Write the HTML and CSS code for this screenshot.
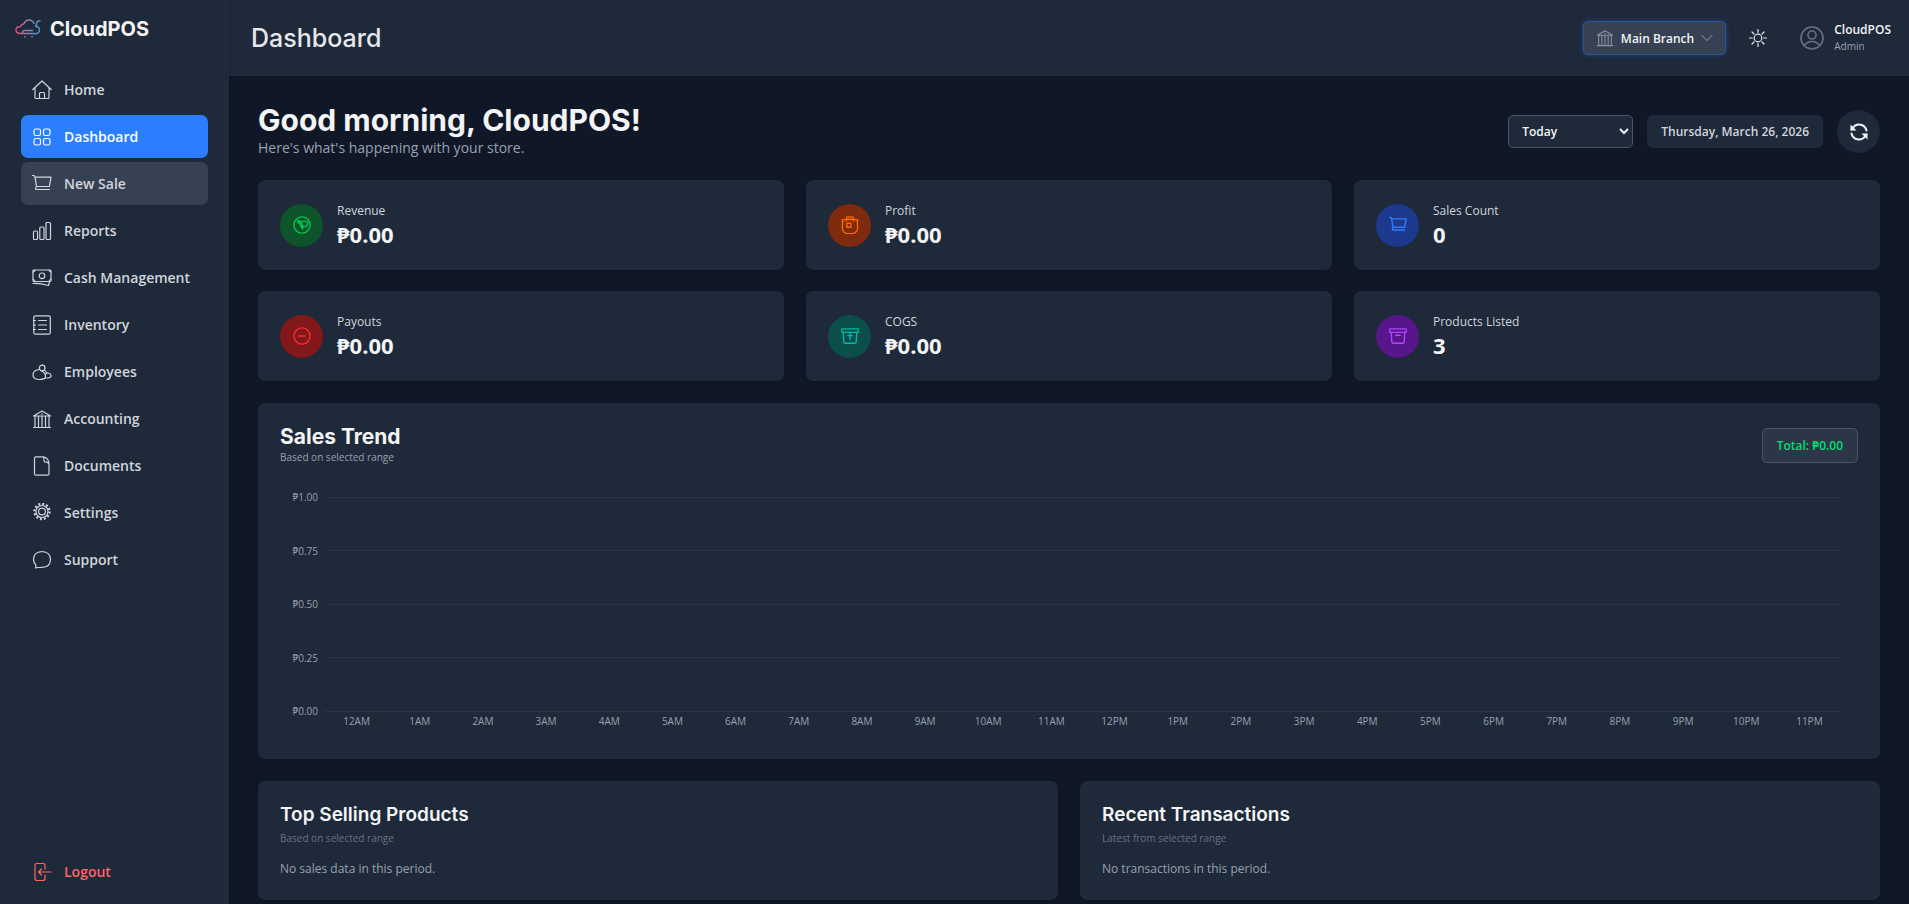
FILE: index.html
```html
<!DOCTYPE html>
<html lang="en">
<head>
  <meta charset="UTF-8" />
  <meta name="viewport" content="width=device-width, initial-scale=1.0"/>
  <title>CloudPOS - Dashboard</title>
  <link rel="stylesheet" href="styles.css">
</head>
<body>
  <!-- shared icons -->
  <svg class="sprite" aria-hidden="true">
    <symbol id="i-cart" viewBox="0 0 20 20"><path d="M.5 1.500h1.700l.8 1.700h16l-1.600 9.300H4.500L3 3.200M4.500 12.500L3.500 14.500q0 1 1 1h13"/></symbol>
    <symbol id="i-bank" viewBox="0 0 20 20"><path d="M1.500 7L10 2l8.500 5zM3 7v11M6.500 7.500V18M10 7.500V18M13.500 7.500V18M17 7v11M1.500 18.500h17M10 4.500v.8"/></symbol>
    <symbol id="i-box" viewBox="0 0 20 20"><rect x=".8" y="2" width="18.400" height="4" rx=".8"/><path d="M2.500 6l.6 10.500q.2 1.500 1.700 1.500h10.400q1.500 0 1.700-1.500L17.500 6"/></symbol>
  </svg>

  <aside class="sidebar">
    <div class="brand">
      <svg class="brand-logo" viewBox="0 0 26 20">
        <defs>
          <linearGradient id="logoFade" gradientUnits="userSpaceOnUse" x1="0" y1="0" x2="26" y2="0">
            <stop offset="0" stop-color="#e0476b"/>
            <stop offset=".55" stop-color="#8a86b5"/>
            <stop offset="1" stop-color="#3f93bd"/>
          </linearGradient>
        </defs>
        <path d="M18.500 14.500H9q-2 0-1.500-1.500t2-1.500h8M5.500 14.500Q1 14.500 1 11T5.500 7.500Q6.500 5 9 4.800Q10.500 1 14 1T19 4.500M25 2h-1.500q-2 .3-2 3.500l-.5 2.500M20.500 7Q24.500 7.500 24.500 11T19.500 14.800M5.500 14.500h2"/>
        <path d="M10 17.500v.5M17 17.500v.5"/>
      </svg>
      <span>CloudPOS</span>
    </div>

    <nav class="nav">
      <a class="nav-item" href="#">
        <svg class="icon" viewBox="0 0 20 20"><path d="M.8 9.500L10 1l9.200 8.500M3 8v9.500q0 1 1 1h12q1 0 1-1V8M7.500 18v-4.500q0-1 1-1h3q1 0 1 1V18"/></svg>
        Home
      </a>
      <a class="nav-item active" href="#">
        <svg class="icon" viewBox="0 0 20 20"><rect x="2" y="2" width="6.500" height="6.500" rx="1.800"/><rect x="11.500" y="2" width="6.500" height="6.500" rx="1.800"/><rect x="2" y="11.500" width="6.500" height="6.500" rx="1.800"/><rect x="11.500" y="11.500" width="6.500" height="6.500" rx="1.800"/></svg>
        Dashboard
      </a>
      <a class="nav-item hovered" href="#">
        <svg class="icon"><use href="#i-cart"/></svg>
        New Sale
      </a>
      <a class="nav-item" href="#">
        <svg class="icon" viewBox="0 0 20 20"><rect x="1.500" y="10" width="4" height="8.500" rx="1"/><rect x="7.800" y="6" width="4.200" height="12.500" rx="1"/><rect x="14" y="1.500" width="4.500" height="17" rx="1"/></svg>
        Reports
      </a>
      <a class="nav-item" href="#">
        <svg class="icon" viewBox="0 0 20 20"><rect x="1" y="2" width="18" height="11.500" rx="1"/><circle cx="10" cy="7.800" r="2.800"/><path d="M1 4q1.500 0 1.800-1.800M19 4q-1.500 0-1.800-1.800M1 11.500q1.500 0 1.800 1.800M19 11.500q-1.500 0-1.800 1.800M1 15.500q8-.3 15.500 2l.8-3"/></svg>
        Cash Management
      </a>
      <a class="nav-item" href="#">
        <svg class="icon" viewBox="0 0 20 20"><rect x="1.800" y=".8" width="16.500" height="18.400" rx="1.500"/><path d="M6.500 5.500h8M6.500 10h8M6.500 14.500h8M1.500 5.500h2M1.500 10h2M1.500 14.500h2"/></svg>
        Inventory
      </a>
      <a class="nav-item" href="#">
        <svg class="icon" viewBox="0 0 20 20"><circle cx="10.200" cy="6" r="2.800"/><path d="M7.500 7.500Q1 8 1 13q0 4.500 6.500 4.500t6-3.500q-.5-4-5-5.500M12.500 8l2 2.500M13.500 12.500q1-2 3-1.500t2.700 2.800q-.2 2.200-3.200 2.200h-3"/></svg>
        Employees
      </a>
      <a class="nav-item" href="#">
        <svg class="icon"><use href="#i-bank"/></svg>
        Accounting
      </a>
      <a class="nav-item" href="#">
        <svg class="icon" viewBox="0 0 20 20"><path d="M11 .8H4q-1.500 0-1.500 1.500v15.400q0 1.500 1.500 1.500h11.500q1.500 0 1.500-1.500V8.500Q17 1.500 11 .8q1 .5 1 3t1.800 2.200T17 8.500"/></svg>
        Documents
      </a>
      <a class="nav-item" href="#">
        <svg class="icon" viewBox="0 0 20 20"><circle class="teeth" cx="10" cy="8.500" r="7.600"/><circle cx="10" cy="8.500" r="6"/><circle cx="10" cy="8.500" r="3.400"/></svg>
        Settings
      </a>
      <a class="nav-item" href="#">
        <svg class="icon" viewBox="0 0 20 20"><path d="M10 1.500q8.500.5 8.500 8T10 17.300q-2 .2-4 .2l-2.500.5q.7-1.500.3-3.200Q1.500 12.500 1.500 9.500 1.500 2 10 1.500z"/></svg>
        Support
      </a>
    </nav>

    <button class="nav-item logout" type="button">
      <svg class="icon" viewBox="0 0 20 20"><path d="M13 7V3.500q0-2-2-2H5q-2 0-2 2v13q0 2 2 2h6q2 0 2-2V13M19 10H7M9.500 7L6.500 10l3 3"/></svg>
      Logout
    </button>
  </aside>

  <div class="main">
    <header class="topbar">
      <h1>Dashboard</h1>
      <div class="topbar-right">
        <button class="branch-btn" type="button">
          <svg class="icon-sm"><use href="#i-bank"/></svg>
          Main Branch
          <svg class="chevron" viewBox="0 0 12 12"><path d="M1 3.500l5 5 5-5"/></svg>
        </button>
        <button class="theme-btn" type="button" aria-label="Toggle theme">
          <svg class="icon" viewBox="0 0 20 20"><circle cx="10" cy="10" r="3.800"/><path d="M10 1.500v2.800M10 15.700v2.800M1.500 10h2.800M15.700 10h2.800M4 4l2 2M14 14l2 2M4 16l2-2M14 6l2-2"/></svg>
        </button>
        <div class="user">
          <svg class="avatar" viewBox="0 0 24 24"><circle cx="12" cy="12" r="11"/><circle cx="12" cy="9" r="4"/><path d="M4.500 19.500Q7 15.500 12 15.500t7.500 4"/></svg>
          <div>
            <div class="user-name">CloudPOS</div>
            <div class="user-role">Admin</div>
          </div>
        </div>
      </div>
    </header>

    <main class="content">
      <section class="welcome">
        <div>
          <h2>Good morning, CloudPOS!</h2>
          <p>Here's what's happening with your store.</p>
        </div>
        <div class="filters">
          <select class="range-select" aria-label="Date range">
            <option>Today</option>
            <option>This Week</option>
            <option>This Month</option>
          </select>
          <div class="date-box">Thursday, March 26, 2026</div>
          <button class="refresh-btn" type="button" aria-label="Refresh">
            <svg class="icon" viewBox="0 0 20 20"><path d="M17.500 8.500A7.600 7.600 0 0 0 4 5.500L2.500 7.500M2.500 11.500A7.600 7.600 0 0 0 16 14.500l1.500-2"/><path class="solid" d="M1.500 2.500v6h6zM18.500 17.500v-6h-6z"/></svg>
          </button>
        </div>
      </section>

      <section class="stats">
        <div class="card stat">
          <div class="stat-icon green"><svg class="icon-sm" viewBox="0 0 20 20"><circle cx="10" cy="10" r="9"/><path d="M5.500 5l5 9.500.5-3M5.500 5.500l3 .5h5.500q2.500 0 2.300 2.500T13.500 12l-4.500-1M9 6.500l1.500 4.500M5.500 5v2.500l3 .5"/></svg></div>
          <div><div class="stat-label">Revenue</div><div class="stat-value">₱0.00</div></div>
        </div>
        <div class="card stat">
          <div class="stat-icon orange"><svg class="icon-sm" viewBox="0 0 20 20"><path d="M1.500 6V4h17v2M1.500 11Q1 19.500 8 19.500h4q7 0 6.500-8.500M2 5.500L1.500 12M18 5.500l.5 6.500M6 5.500V2.500Q6 1 7.500 1h5Q14 1 14 2.500v3M6 3.500h8"/><rect x="6.500" y="8" width="4.500" height="4.500"/></svg></div>
          <div><div class="stat-label">Profit</div><div class="stat-value">₱0.00</div></div>
        </div>
        <div class="card stat">
          <div class="stat-icon blue"><svg class="icon-sm"><use href="#i-cart"/></svg></div>
          <div><div class="stat-label">Sales Count</div><div class="stat-value">0</div></div>
        </div>
        <div class="card stat">
          <div class="stat-icon red"><svg class="icon-sm" viewBox="0 0 20 20"><circle cx="10" cy="10" r="9"/><path d="M6.500 10h7"/></svg></div>
          <div><div class="stat-label">Payouts</div><div class="stat-value">₱0.00</div></div>
        </div>
        <div class="card stat">
          <div class="stat-icon teal"><svg class="icon-sm" viewBox="0 0 20 20"><use href="#i-box"/><path d="M10 7V14M7.500 9.500h5"/></svg></div>
          <div><div class="stat-label">COGS</div><div class="stat-value">₱0.00</div></div>
        </div>
        <div class="card stat">
          <div class="stat-icon purple"><svg class="icon-sm" viewBox="0 0 20 20"><use href="#i-box"/><path d="M7.500 9.200h5"/></svg></div>
          <div><div class="stat-label">Products Listed</div><div class="stat-value">3</div></div>
        </div>
      </section>

      <section class="card trend">
        <div class="trend-head">
          <div>
            <h3>Sales Trend</h3>
            <p class="trend-sub">Based on selected range</p>
          </div>
          <div class="total-box">Total: ₱0.00</div>
        </div>
        <div class="chart">
          <div class="chart-rows">
            <div class="chart-row"><span>₱1.00</span><i></i></div>
            <div class="chart-row"><span>₱0.75</span><i></i></div>
            <div class="chart-row"><span>₱0.50</span><i></i></div>
            <div class="chart-row"><span>₱0.25</span><i></i></div>
            <div class="chart-row"><span>₱0.00</span><i></i></div>
          </div>
          <div class="chart-hours">
            <span>12AM</span><span>1AM</span><span>2AM</span><span>3AM</span><span>4AM</span><span>5AM</span>
            <span>6AM</span><span>7AM</span><span>8AM</span><span>9AM</span><span>10AM</span><span>11AM</span>
            <span>12PM</span><span>1PM</span><span>2PM</span><span>3PM</span><span>4PM</span><span>5PM</span>
            <span>6PM</span><span>7PM</span><span>8PM</span><span>9PM</span><span>10PM</span><span>11PM</span>
          </div>
        </div>
      </section>

      <section class="lists">
        <div class="card list">
          <h4>Top Selling Products</h4>
          <p class="list-sub">Based on selected range</p>
          <p class="list-empty">No sales data in this period.</p>
        </div>
        <div class="card list">
          <h4>Recent Transactions</h4>
          <p class="list-sub">Latest from selected range</p>
          <p class="list-empty">No transactions in this period.</p>
        </div>
      </section>
    </main>
  </div>
</body>
</html>
```

FILE: styles.css
```css
* { margin: 0; padding: 0; box-sizing: border-box; }

body {
  display: flex;
  height: 100vh;
  background: #101828;
  color: #f3f4f6;
  font-family: "Open Sans", "Noto Sans", sans-serif;
  font-size: 12px;
}

button, select { font: inherit; color: inherit; cursor: pointer; }

svg {
  fill: none;
  stroke: currentColor;
  stroke-width: 1.2;
  stroke-linecap: round;
  stroke-linejoin: round;
}

.sprite { display: none; }
.icon { width: 20px; height: 20px; flex-shrink: 0; }
.icon-sm { width: 18px; height: 18px; flex-shrink: 0; stroke-width: 1.5; }
.teeth { stroke-width: 2.2; stroke-linecap: butt; stroke-dasharray: 2 1.980; }

h1, h2, h3, h4, .brand { font-family: Inter, sans-serif; }

/* Sidebar */
.sidebar {
  width: 229px;
  flex-shrink: 0;
  display: flex;
  flex-direction: column;
  background: #1e2939;
  box-shadow: 0 0 3px rgba(0, 0, 0, 0.2);
  z-index: 1;
}

.brand {
  display: flex;
  align-items: center;
  gap: 9px;
  height: 57px;
  padding-left: 15px;
  font-size: 20px;
  font-weight: 700;
}

.brand-logo { width: 26px; height: 20px; stroke: url(#logoFade); stroke-width: 1.5; }

.nav {
  flex: 1;
  display: flex;
  flex-direction: column;
  gap: 4px;
  padding: 11px 21px;
}

.nav-item {
  display: flex;
  align-items: center;
  gap: 12px;
  height: 43px;
  padding: 0 11px;
  border-radius: 7px;
  color: #d1d5dc;
  font-size: 14px;
  font-weight: 600;
  text-decoration: none;
}

.nav-item:hover, .nav-item.hovered { background: #364153; }
.nav-item.active { background: #2b7fff; color: #fff; }

.logout {
  margin: 0 21px 11px;
  background: none;
  border: none;
  color: #ff6467;
}

/* Top bar */
.main {
  flex: 1;
  min-width: 0;
  display: flex;
  flex-direction: column;
}

.topbar {
  display: flex;
  align-items: center;
  justify-content: space-between;
  height: 76px;
  flex-shrink: 0;
  padding: 0 18px 0 22px;
  background: #1e2939;
}

.topbar h1 { font-size: 25px; font-weight: 500; color: #e5e7eb; }

.topbar-right { display: flex; align-items: center; }

.branch-btn {
  display: flex;
  align-items: center;
  gap: 7px;
  height: 34px;
  padding: 0 12px;
  background: #364153;
  border: 1px solid #2c5596;
  border-radius: 5px;
  box-shadow: 0 0 5px rgba(43, 127, 255, 0.4);
  font-weight: 600;
}

.branch-btn .icon-sm { color: #8a93a3; stroke-width: 1.2; }
.chevron { width: 12px; height: 12px; color: #6a7282; }

.theme-btn {
  display: flex;
  margin: 0 32px 0 22px;
  background: none;
  border: none;
  color: #e5e7eb;
}

.user { display: flex; align-items: center; gap: 10px; }
.avatar { width: 24px; height: 24px; color: #6a7282; stroke-width: 1.6; }
.user-name { font-weight: 600; line-height: 16px; }
.user-role { font-size: 10px; line-height: 16px; color: #99a1af; }

/* Content */
.content {
  flex: 1;
  padding: 29px;
  overflow-y: auto;
  scrollbar-width: none;
}

.welcome {
  display: flex;
  justify-content: space-between;
  align-items: center;
  margin-bottom: 22px;
}

.welcome h2 { font-size: 30px; font-weight: 700; line-height: 30px; }
.welcome p { margin-top: 3px; font-size: 14px; line-height: 20px; color: #99a1af; }

.filters { display: flex; align-items: center; gap: 14px; }

.range-select {
  width: 125px;
  height: 33px;
  padding: 0 9px;
  background: #1e2939;
  border: 1px solid #4a5565;
  border-radius: 5px;
  font-weight: 600;
}

.date-box {
  height: 33px;
  padding: 0 14px;
  border-radius: 6px;
  background: #1e2939;
  color: #d1d5dc;
  font-weight: 600;
  line-height: 33px;
}

.refresh-btn {
  display: flex;
  align-items: center;
  justify-content: center;
  width: 43px;
  height: 43px;
  border: none;
  border-radius: 50%;
  background: #1e2939;
}

.refresh-btn .icon { stroke-width: 2; }
.solid { fill: currentColor; stroke: none; }

.card {
  background: #1e2939;
  border-radius: 7px;
  box-shadow: 0 1px 3px rgba(0, 0, 0, 0.2);
}

.stats {
  display: grid;
  grid-template-columns: repeat(3, 1fr);
  gap: 21px 22px;
}

.stat {
  display: flex;
  align-items: center;
  gap: 14px;
  height: 90px;
  padding: 0 22px;
}

.stat-icon {
  display: flex;
  align-items: center;
  justify-content: center;
  width: 43px;
  height: 43px;
  border-radius: 50%;
}

.green { background: #0d542b; color: #00c950; }
.orange { background: #7e2a0c; color: #ff6900; }
.blue { background: #1c398e; color: #2b7fff; }
.red { background: #82181a; color: #fb2c36; }
.teal { background: #0b4f4a; color: #00bba7; }
.purple { background: #59168b; color: #ad46ff; }

.stat-label { color: #d1d5dc; line-height: 18px; }
.stat-value { font-size: 22px; font-weight: 700; line-height: 29px; }

/* Sales trend */
.trend {
  margin-top: 22px;
  padding: 22px 22px 29px;
}

.trend-head {
  display: flex;
  align-items: center;
  justify-content: space-between;
}

.trend h3 { font-size: 21px; font-weight: 700; line-height: 24px; }
.trend-sub { font-size: 10px; line-height: 16px; color: #99a1af; }

.total-box {
  padding: 0 14px;
  border: 1px solid #4a5565;
  border-radius: 5px;
  background: #2b3646;
  color: #05df72;
  font-weight: 600;
  line-height: 33px;
}

.chart {
  margin-top: 23px;
  padding-right: 17px;
  color: #99a1af;
  font-size: 10px;
  line-height: 18px;
}

.chart-rows {
  display: flex;
  flex-direction: column;
  justify-content: space-between;
  height: 232px;
}

.chart-row { display: flex; align-items: center; gap: 7px; }
.chart-row span { width: 38px; text-align: right; }

.chart-row i {
  flex: 1;
  height: 1px;
  background: repeating-linear-gradient(90deg, #2f3c4d 0 2px, transparent 2px 4px);
}

.chart-hours {
  display: grid;
  grid-template-columns: repeat(24, 1fr);
  margin: -8px 0 0 45px;
  text-align: center;
}

/* Bottom cards */
.lists {
  display: grid;
  grid-template-columns: 1fr 1fr;
  gap: 22px;
  margin-top: 22px;
}

.list { padding: 22px; }
.list h4 { font-size: 19px; font-weight: 600; line-height: 24px; }
.list-sub { margin-top: 3px; font-size: 10px; line-height: 16px; color: #6a7282; }
.list-empty { margin-top: 14px; line-height: 18px; color: #99a1af; }
```
